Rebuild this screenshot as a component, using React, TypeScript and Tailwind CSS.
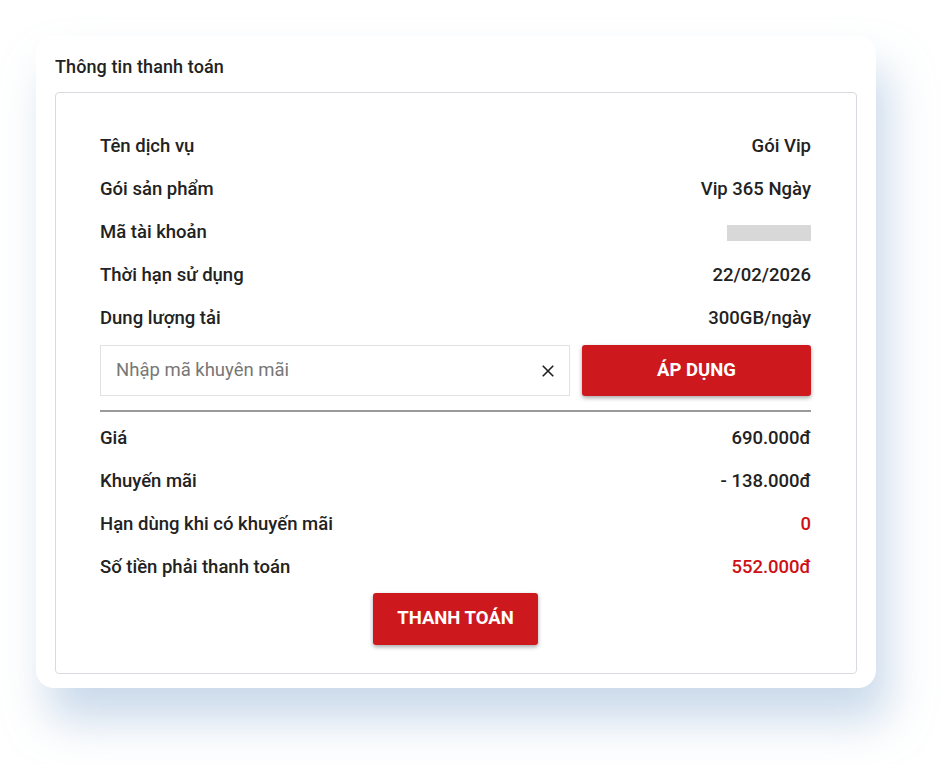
import React from 'react'

const rows1 = [
  { label: 'Tên dịch vụ', value: 'Gói Vip' },
  { label: 'Gói sản phẩm', value: 'Vip 365 Ngày' },
  { label: 'Mã tài khoản', value: null },
  { label: 'Thời hạn sử dụng', value: '22/02/2026' },
  { label: 'Dung lượng tải', value: '300GB/ngày' },
]

const rows2 = [
  { label: 'Giá', value: '690.000đ', red: false },
  { label: 'Khuyến mãi', value: '- 138.000đ', red: false },
  { label: 'Hạn dùng khi có khuyến mãi', value: '0', red: true },
  { label: 'Số tiền phải thanh toán', value: '552.000đ', red: true },
]

function Row({ label, children }: { label: string; children: React.ReactNode }) {
  return (
    <div className="flex items-center justify-between h-[43px] text-[18.5px] font-medium text-[#222]">
      <span>{label}</span>
      {children}
    </div>
  )
}

export default function App() {
  return (
    <div className="w-[952px] h-[764px] bg-white pt-[36px] pl-[36px] font-['Roboto',sans-serif]">
      <div className="w-[840px] h-[652px] bg-white rounded-[18px] shadow-[12px_32px_44px_rgba(150,182,215,0.5)] px-[19px] pt-[18px]">
        <h2 className="text-[18px] font-medium text-[#222] h-[26px] leading-[26px] tracking-[0.1px]">Thông tin thanh toán</h2>
        <div className="mt-[12px] h-[582px] border border-[#d7dbe0] rounded-[4px] pl-[44px] pr-[45px] pt-[32px]">
          {rows1.map((r) => (
            <Row key={r.label} label={r.label}>
              {r.value ? <span>{r.value}</span> : <span className="w-[84px] h-[16px] bg-[#d8d8d8]" />}
            </Row>
          ))}

          {/* promo code */}
          <div className="flex gap-[12px] mt-[5px]">
            <div className="flex-1 h-[51px] border border-[#e2e2e2] flex items-center pl-[15px] pr-[12px]">
              <span className="flex-1 text-[18.5px] text-[#777]">Nhập mã khuyên mãi</span>
              <svg width="18" height="18" viewBox="0 0 24 24" fill="none" stroke="#222" strokeWidth="2.2">
                <path d="M5 5L19 19M19 5L5 19" />
              </svg>
            </div>
            <button className="w-[229px] h-[51px] bg-[#cd181d] rounded-[3px] text-white text-[18.5px] font-bold shadow-[0_2px_4px_rgba(0,0,0,0.35)]">
              ÁP DỤNG
            </button>
          </div>
          <div className="mt-[14px] h-[2px] bg-[#9a9a9a] mb-[5px]" />

          {rows2.map((r) => (
            <Row key={r.label} label={r.label}>
              <span className={r.red ? 'text-[#cc1015]' : ''}>{r.value}</span>
            </Row>
          ))}

          <div className="flex justify-center mt-[4px]">
            <button className="w-[165px] h-[52px] bg-[#cd181d] rounded-[3px] text-white text-[18.5px] font-bold shadow-[0_2px_4px_rgba(0,0,0,0.35)]">
              THANH TOÁN
            </button>
          </div>
        </div>
      </div>
    </div>
  )
}
